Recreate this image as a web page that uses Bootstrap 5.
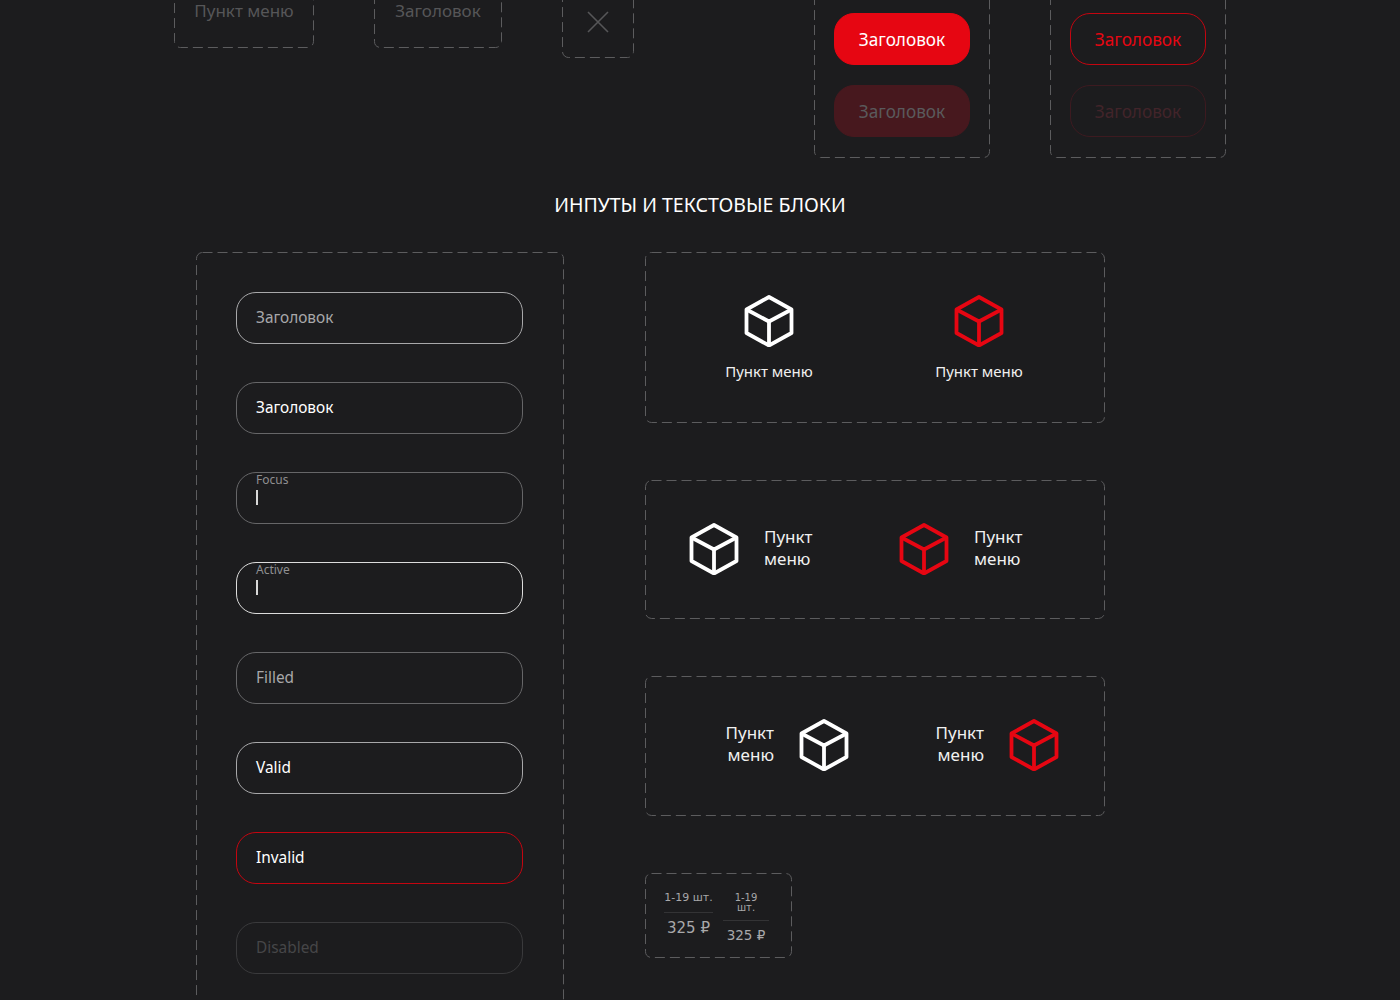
<!DOCTYPE html>
<html lang="ru">
<head>
    <meta charset="UTF-8">
    <meta name="viewport" content="width=device-width, initial-scale=1">
    <title>ИНПУТЫ И ТЕКСТОВЫЕ БЛОКИ</title>
    <link href="https://cdn.jsdelivr.net/npm/bootstrap@5.3.0/dist/css/bootstrap.min.css" rel="stylesheet">
    <style>
        html, body { height: 1000px; overflow: hidden; }
        body {
            background: #1c1c1e;
            color: #fff;
            font-family: "Noto Sans", sans-serif;
            font-size: 16px;
        }
        .sheet { width: 1400px; height: 1000px; overflow: hidden; }

        /* dashed frame: css dashed is too short, so an svg rect does the dashes */
        .dash-frame {
            background-image: url("data:image/svg+xml,%3Csvg xmlns='http://www.w3.org/2000/svg' width='100%25' height='100%25'%3E%3Crect x='.5' y='.5' rx='6' style='width:calc(100%25 - 1px);height:calc(100%25 - 1px)' fill='none' stroke='%235c5c5e' stroke-dasharray='10 5'/%3E%3C/svg%3E");
        }

        .top-row { margin-top: -30px; height: 188px; padding-left: 174px; }
        .ghost-a { width: 140px; height: 78px; margin-right: 60px; padding-top: 30px; }
        .ghost-b { width: 128px; height: 78px; margin-right: 60px; padding-top: 30px; }
        .ghost-c { width: 72px; height: 88px; margin-right: 180px; padding-top: 41px; }
        .ghost-text { color: #565658; font-size: 17px; line-height: 22px; text-align: center; }
        .btn-frame { width: 176px; height: 188px; padding: 43px 20px 0; margin-right: 60px; gap: 20px; }
        .btn-frame .btn {
            width: 136px; height: 52px; padding: 2px 0 0;
            border-radius: 20px; font-size: 17.2px; line-height: 48px;
        }
        .btn-red { background: #e60612; border: 1px solid #e60612; color: #fff; }
        .btn-red-off { background: #47181e; border: 1px solid #47181e; color: #5a5a5c; }
        .btn-line { background: transparent; border: 1px solid #c40510; color: #e60612; }
        .btn-line-off { background: transparent; border: 1px solid #3d1a20; color: #42242a; }

        .block-title { margin: 33px 0 33px; font-size: 19.5px; line-height: 28px; text-align: center; }

        .bottom-row { padding-left: 196px; }
        .input-frame { width: 368px; height: 800px; padding: 40px 0 0 40px; margin-right: 81px; }
        .fake-input {
            width: 287px; height: 52px; padding: 0 19px;
            border: 1px solid #666668; border-radius: 20px;
            font-size: 15.4px; line-height: 20px;
        }
        .mt-field { margin-top: 38px; }
        .float-label { font-size: 12px; line-height: 14px; color: #8f8f91; }
        .caret-bar { width: 2px; height: 15px; margin-top: 3px; background: #d8d8d8; }
        .st-hint { border-color: #a8a8aa; color: #a8a8aa; }
        .st-active { border-color: #dcdcdc; }
        .st-filled { color: #a8a8aa; }
        .st-valid { border-color: #a8a8aa; }
        .st-invalid { border-color: #c40510; }
        .st-off { border-color: #3a3a3c; color: #464648; }

        .right-col { width: 460px; }
        .tile-one { height: 171px; padding: 43px 0 0 19px; margin-bottom: 57px; }
        .tile-two { height: 139px; padding: 0 0 2px 44px; margin-bottom: 57px; }
        .tile-three { height: 140px; padding: 0 46px 2px 0; margin-bottom: 57px; }
        .menu-item { width: 210px; flex-shrink: 0; }
        .cube { width: 50px; height: 52px; fill: none; stroke: #fff; stroke-width: 3.8; stroke-linejoin: round; flex-shrink: 0; }
        .cube-red { stroke: #e60612; }
        .cube-gap-r { margin-right: 25px; }
        .cube-gap-l { margin-left: 25px; }
        .item-label { margin-top: 13px; font-size: 15px; line-height: 22px; color: #f0f0f0; }
        .item-side { font-size: 17px; line-height: 22px; padding-bottom: 2px; color: #f0f0f0; }

        .price-frame { width: 147px; height: 85px; padding: 17px 0 0 19px; color: #a8a8aa; }
        .price-col-a { width: 49px; margin-right: 10px; }
        .price-col-b { width: 46px; }
        .price-qty { font-family: "DejaVu Sans", sans-serif; font-size: 11px; line-height: 15px; padding-bottom: 7px; border-bottom: 1px solid #333335; text-align: center; white-space: nowrap; }
        .price-col-b .price-qty { font-size: 10px; line-height: 10px; padding-top: 3px; padding-bottom: 7px; }
        .price-sum { font-family: "DejaVu Sans", sans-serif; font-size: 15px; line-height: 20px; margin-top: 5px; text-align: center; white-space: nowrap; }
        .price-col-b .price-sum { font-size: 13.5px; margin-top: 4px; }
    </style>
</head>
<body>
    <svg width="0" height="0" class="d-block position-absolute">
        <symbol id="box" viewBox="0 0 50 52">
            <path d="M25 2 47.5 14.5V38L25 50.5 2.5 38V14.5Z"/>
            <path d="M2.5 14.5 25 26.5 47.5 14.5M25 26.5V50.5"/>
        </symbol>
    </svg>

    <div class="sheet">
        <!-- верхний ряд -->
        <div class="top-row d-flex align-items-start">
            <div class="dash-frame ghost-a ghost-text">Пункт меню</div>
            <div class="dash-frame ghost-b ghost-text">Заголовок</div>
            <div class="dash-frame ghost-c d-flex justify-content-center align-items-start">
                <svg width="22" height="22" viewBox="0 0 22 22" fill="none" stroke="#565658" stroke-width="1.6"><path d="M1 1 21 21M21 1 1 21"/></svg>
            </div>
            <div class="dash-frame btn-frame d-flex flex-column">
                <button class="btn btn-red" type="button">Заголовок</button>
                <button class="btn btn-red-off" type="button">Заголовок</button>
            </div>
            <div class="dash-frame btn-frame d-flex flex-column">
                <button class="btn btn-line" type="button">Заголовок</button>
                <button class="btn btn-line-off" type="button">Заголовок</button>
            </div>
        </div>

        <h2 class="block-title fw-normal">ИНПУТЫ И ТЕКСТОВЫЕ БЛОКИ</h2>

        <div class="bottom-row d-flex align-items-start">
            <!-- инпуты -->
            <div class="dash-frame input-frame d-flex flex-column flex-shrink-0">
                <div class="fake-input st-hint d-flex align-items-center">Заголовок</div>
                <div class="fake-input mt-field d-flex align-items-center">Заголовок</div>
                <div class="fake-input mt-field">
                    <div class="float-label">Focus</div>
                    <div class="caret-bar"></div>
                </div>
                <div class="fake-input mt-field st-active">
                    <div class="float-label">Active</div>
                    <div class="caret-bar"></div>
                </div>
                <div class="fake-input mt-field st-filled d-flex align-items-center">Filled</div>
                <div class="fake-input mt-field st-valid d-flex align-items-center">Valid</div>
                <div class="fake-input mt-field st-invalid d-flex align-items-center">Invalid</div>
                <div class="fake-input mt-field st-off d-flex align-items-center">Disabled</div>
            </div>

            <!-- пункты меню -->
            <div class="right-col flex-shrink-0">
                <div class="dash-frame tile-one d-flex">
                    <div class="menu-item d-flex flex-column align-items-center">
                        <svg class="cube"><use href="#box"/></svg>
                        <div class="item-label">Пункт меню</div>
                    </div>
                    <div class="menu-item d-flex flex-column align-items-center">
                        <svg class="cube cube-red"><use href="#box"/></svg>
                        <div class="item-label">Пункт меню</div>
                    </div>
                </div>
                <div class="dash-frame tile-two d-flex align-items-center">
                    <div class="menu-item d-flex align-items-center">
                        <svg class="cube cube-gap-r"><use href="#box"/></svg>
                        <div class="item-side">Пункт<br>меню</div>
                    </div>
                    <div class="menu-item d-flex align-items-center">
                        <svg class="cube cube-red cube-gap-r"><use href="#box"/></svg>
                        <div class="item-side">Пункт<br>меню</div>
                    </div>
                </div>
                <div class="dash-frame tile-three d-flex align-items-center justify-content-end">
                    <div class="menu-item d-flex align-items-center justify-content-end">
                        <div class="item-side text-end">Пункт<br>меню</div>
                        <svg class="cube cube-gap-l"><use href="#box"/></svg>
                    </div>
                    <div class="menu-item d-flex align-items-center justify-content-end">
                        <div class="item-side text-end">Пункт<br>меню</div>
                        <svg class="cube cube-red cube-gap-l"><use href="#box"/></svg>
                    </div>
                </div>
                <div class="dash-frame price-frame d-flex align-items-start">
                    <div class="price-col-a">
                        <div class="price-qty">1-19 шт.</div>
                        <div class="price-sum">325 ₽</div>
                    </div>
                    <div class="price-col-b">
                        <div class="price-qty">1-19<br>шт.</div>
                        <div class="price-sum">325 ₽</div>
                    </div>
                </div>
            </div>
        </div>
    </div>

    <script src="https://cdn.jsdelivr.net/npm/bootstrap@5.3.0/dist/js/bootstrap.bundle.min.js"></script>
</body>
</html>
